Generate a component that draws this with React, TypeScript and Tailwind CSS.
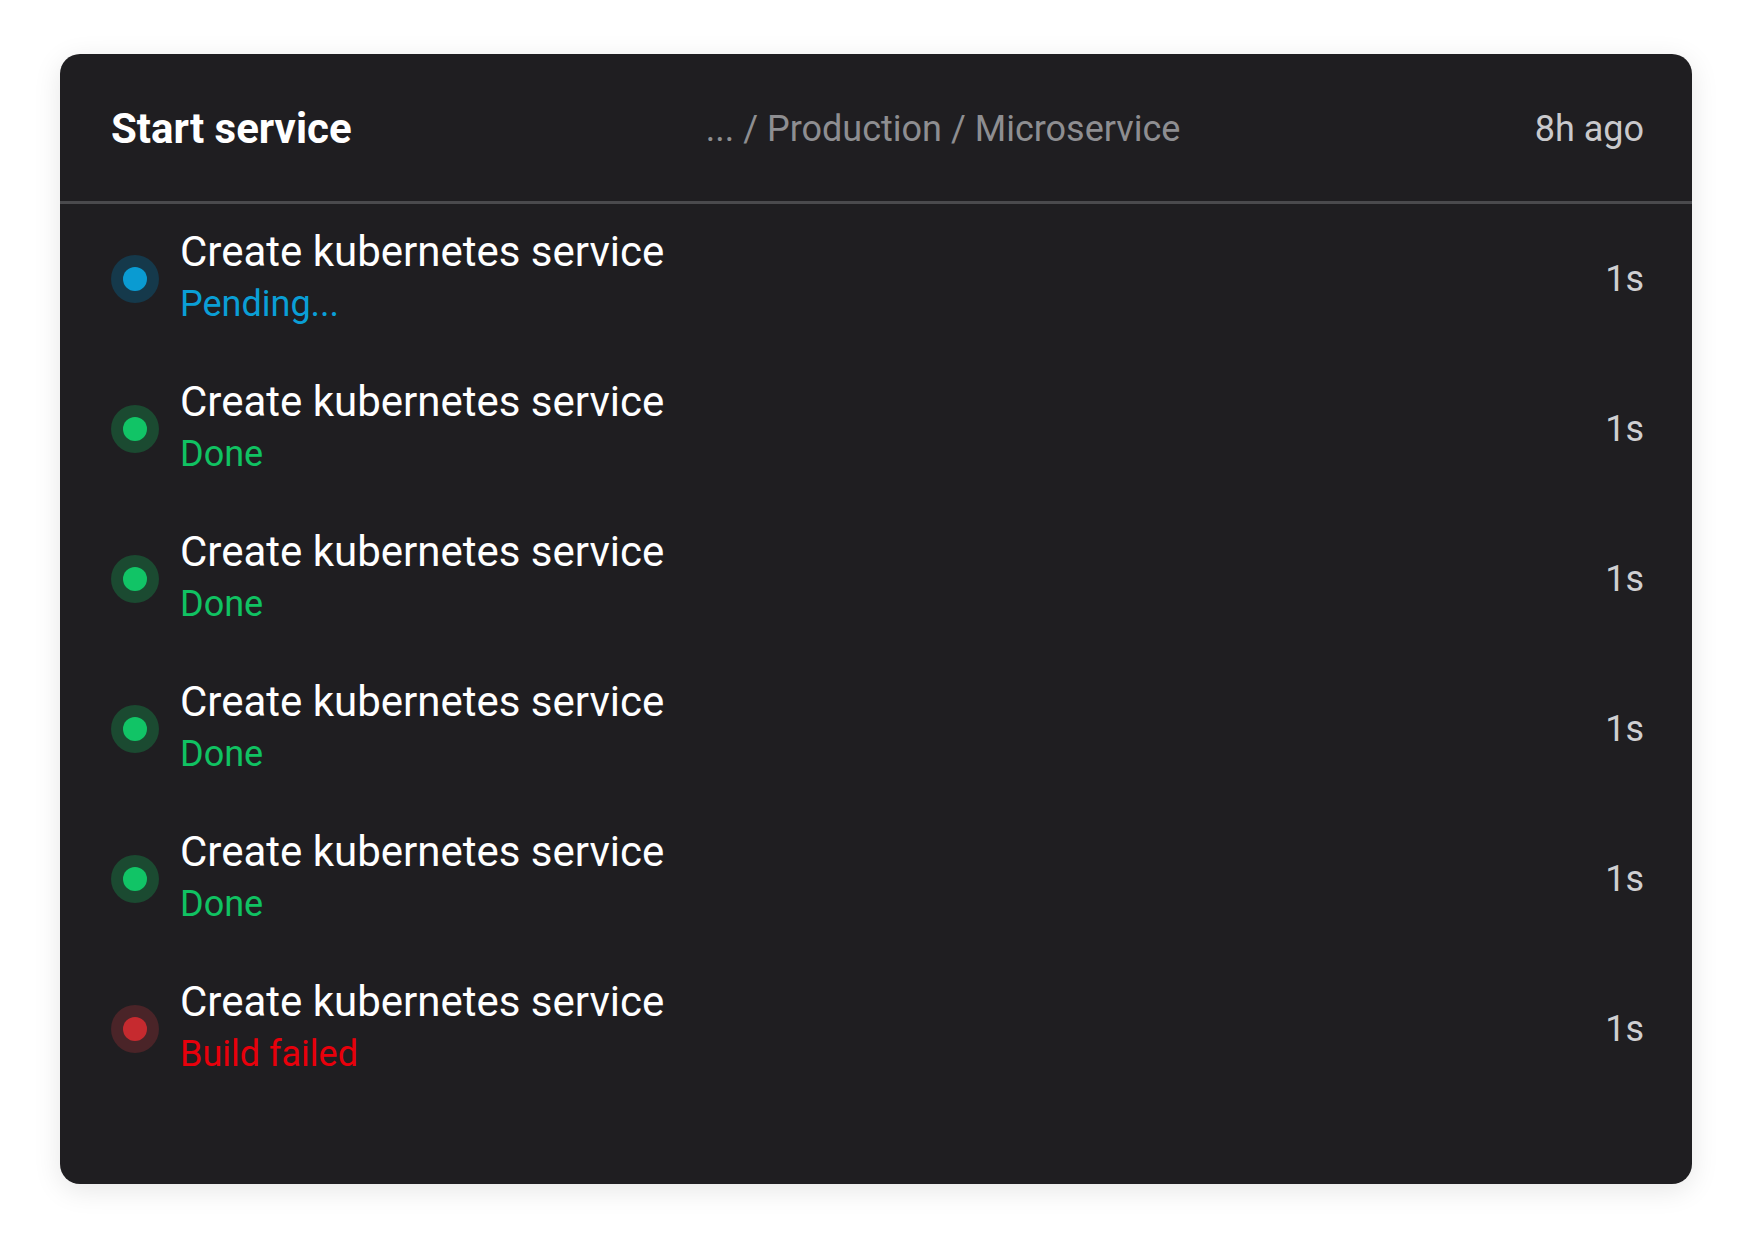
import React from "react";

type Status = "pending" | "done" | "failed";

const rows: { status: Status; label: string }[] = [
  { status: "pending", label: "Pending..." },
  { status: "done", label: "Done" },
  { status: "done", label: "Done" },
  { status: "done", label: "Done" },
  { status: "done", label: "Done" },
  { status: "failed", label: "Build failed" },
];

function Dot({ status }: { status: Status }) {
  if (status === "pending")
    return (
      <div className="flex h-[48px] w-[48px] shrink-0 items-center justify-center rounded-full bg-[#15394b]">
        <div className="h-[24px] w-[24px] rounded-full bg-[#0a9bd2]" />
      </div>
    );
  if (status === "done")
    return (
      <div className="flex h-[48px] w-[48px] shrink-0 items-center justify-center rounded-full bg-[#1b4a31]">
        <div className="h-[24px] w-[24px] rounded-full bg-[#11c466]" />
      </div>
    );
  return (
    <div className="flex h-[48px] w-[48px] shrink-0 items-center justify-center rounded-full bg-[#4a2428]">
      <div className="h-[24px] w-[24px] rounded-full bg-[#c62a2f]" />
    </div>
  );
}

function labelClass(status: Status) {
  if (status === "pending") return "text-[#0a9fd6]";
  if (status === "done") return "text-[#10c262]";
  return "text-[#e8000b]";
}

export default function App() {
  return (
    <div
      className="min-h-[1251px] w-full bg-white pt-[54px]"
      style={{ fontFamily: "Roboto, 'Noto Sans', sans-serif" }}
    >
      <div className="ml-[60px] h-[1130px] w-[1632px] overflow-hidden rounded-[20px] bg-[#1f1e21] shadow-[0_6px_28px_rgba(0,0,0,0.10)]">
        <div className="flex h-[150px] items-center justify-between border-b-[3px] border-[#4a4a4d] pl-[51px] pr-[48px] pt-[2px]">
          <div className="text-[42px] font-bold text-white">Start service</div>
          <div className="text-[36px] text-[#8e8e91]">... / Production / Microservice</div>
          <div className="text-[36px] text-[#c9c9cc]">8h ago</div>
        </div>
        <div className="flex flex-col">
          {rows.map((r, i) => (
            <div key={i} className="flex h-[150px] items-center pl-[51px] pr-[48px]">
              <Dot status={r.status} />
              <div className="ml-[21px] flex flex-1 flex-col">
                <div className="text-[42px] leading-[48px] text-white">Create kubernetes service</div>
                <div className={`mt-[2px] text-[36px] leading-[53px] ${labelClass(r.status)}`}>{r.label}</div>
              </div>
              <div className="text-[36px] text-[#cfcfd1]">1s</div>
            </div>
          ))}
        </div>
      </div>
    </div>
  );
}
